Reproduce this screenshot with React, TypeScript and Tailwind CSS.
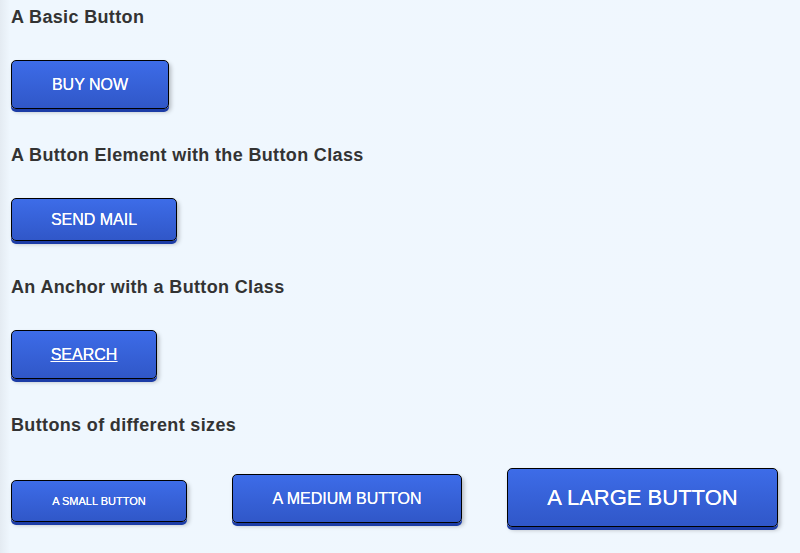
import React from "react";

const btnBase =
  "flex items-center justify-center shrink-0 border border-black rounded-[5px] text-white [text-shadow:0_0_0.6px_#ffffff] bg-[linear-gradient(to_bottom,#3d6ce8,#3057c8)] shadow-[0_3px_0_#1c3ca6,2px_3px_4px_rgba(0,0,0,0.25)]";

const heading = "text-[18px] leading-[20px] font-bold text-[#333] tracking-[0.35px]";

export default function App() {
  return (
    <div
      className="w-[800px] h-[553px] overflow-hidden bg-[linear-gradient(to_right,#e4ebf2,#eff7fe_10px,#f0f7fe)] pl-[11px] pt-[7px] flex flex-col items-start"
      style={{ fontFamily: '"Liberation Sans", Arial, sans-serif' }}
    >
      <h2 className={heading}>A Basic Button</h2>
      <div className={`${btnBase} mt-[33px] w-[158px] h-[49px] text-[16px]`}>BUY NOW</div>

      <h2 className={`${heading} mt-[36px]`}>A Button Element with the Button Class</h2>
      <button className={`${btnBase} mt-[33px] w-[166px] h-[43px] text-[16px]`}>SEND MAIL</button>

      <h2 className={`${heading} mt-[36px]`}>An Anchor with a Button Class</h2>
      <a href="#" className={`${btnBase} mt-[33px] w-[146px] h-[49px] text-[16px] underline`}>
        SEARCH
      </a>

      <h2 className={`${heading} mt-[36px]`}>Buttons of different sizes</h2>
      <div className="mt-[33px] flex items-start gap-[45px]">
        <div className={`${btnBase} mt-[12px] w-[176px] h-[42px] text-[11px]`}>A SMALL BUTTON</div>
        <div className={`${btnBase} mt-[6px] w-[230px] h-[49px] text-[16px]`}>A MEDIUM BUTTON</div>
        <div className={`${btnBase} w-[271px] h-[59px] text-[22px]`}>A LARGE BUTTON</div>
      </div>
    </div>
  );
}
